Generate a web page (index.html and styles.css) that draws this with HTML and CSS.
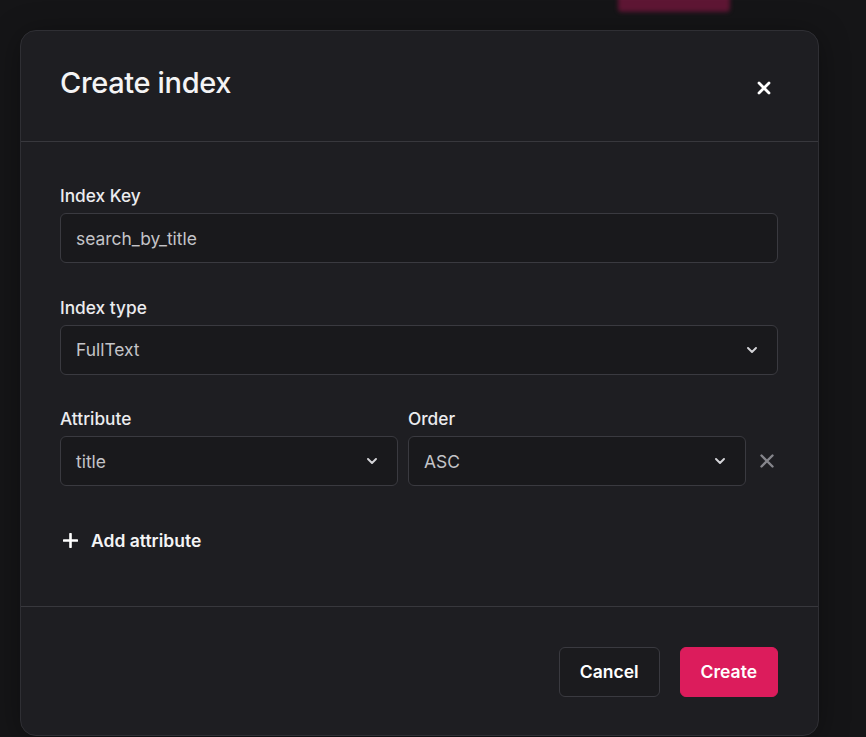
FILE: index.html
```html
<!DOCTYPE html>
<html lang="en">
<head>
<meta charset="utf-8">
<title>Create index</title>
<link rel="stylesheet" href="styles.css">
</head>
<body>
<div class="backdrop-btn"></div>
<div class="overlay">
  <div class="modal">
    <div class="modal-header">
      <h2 class="modal-title">Create index</h2>
      <button class="close-btn" aria-label="Close">
        <svg width="14" height="14" viewBox="0 0 14 14"><path d="M2 2 L12 12 M12 2 L2 12" stroke="#ffffff" stroke-width="2.8" stroke-linecap="round"/></svg>
      </button>
    </div>
    <div class="modal-body">
      <div class="field">
        <label class="label">Index Key</label>
        <div class="input">search_by_title</div>
      </div>
      <div class="field">
        <label class="label">Index type</label>
        <div class="input select">
          <span>FullText</span>
          <svg class="chev" width="10" height="6" viewBox="0 0 10 6"><path d="M1 1 L5 5 L9 1" fill="none" stroke="#d4d4d8" stroke-width="1.9" stroke-linecap="round" stroke-linejoin="round"/></svg>
        </div>
      </div>
      <div class="row">
        <div class="field col">
          <label class="label">Attribute</label>
          <div class="input select">
            <span>title</span>
            <svg class="chev" width="10" height="6" viewBox="0 0 10 6"><path d="M1 1 L5 5 L9 1" fill="none" stroke="#d4d4d8" stroke-width="1.9" stroke-linecap="round" stroke-linejoin="round"/></svg>
          </div>
        </div>
        <div class="field col">
          <label class="label">Order</label>
          <div class="input select">
            <span>ASC</span>
            <svg class="chev" width="10" height="6" viewBox="0 0 10 6"><path d="M1 1 L5 5 L9 1" fill="none" stroke="#d4d4d8" stroke-width="1.9" stroke-linecap="round" stroke-linejoin="round"/></svg>
          </div>
        </div>
        <button class="remove-btn" aria-label="Remove">
          <svg width="14" height="14" viewBox="0 0 14 14"><path d="M1.5 1.5 L12.5 12.5 M12.5 1.5 L1.5 12.5" stroke="#85858b" stroke-width="2.4" stroke-linecap="round"/></svg>
        </button>
      </div>
      <button class="add-btn">
        <svg width="15" height="15" viewBox="0 0 15 15"><path d="M7.5 1 V14 M1 7.5 H14" stroke="#ffffff" stroke-width="2.6" stroke-linecap="round"/></svg>
        <span>Add attribute</span>
      </button>
    </div>
    <div class="modal-footer">
      <button class="btn btn-secondary">Cancel</button>
      <button class="btn btn-primary">Create</button>
    </div>
  </div>
</div>
</body>
</html>
```

FILE: styles.css
```css
* { box-sizing: border-box; }
html, body {
  margin: 0;
  padding: 0;
  height: 100%;
}
body {
  background: #151517;
  font-family: Inter, "Noto Sans", sans-serif;
  color: #ececef;
  overflow: hidden;
  position: relative;
}
.backdrop-btn {
  position: absolute;
  left: 618px;
  top: -10px;
  width: 112px;
  height: 22px;
  background: #5e1634;
  border-radius: 4px;
  filter: blur(2px);
}
.overlay {
  position: relative;
  padding: 30px 0 0 20px;
}
.modal {
  width: 799px;
  height: 706px;
  background: #1e1e22;
  border: 1px solid #2f2f34;
  border-radius: 16px;
  box-shadow: 0 4px 30px rgba(0,0,0,0.35);
  display: flex;
  flex-direction: column;
}
.modal-header {
  display: flex;
  align-items: center;
  justify-content: space-between;
  padding: 35px 47px 41px 39px;
  border-bottom: 1px solid #38383d;
}
.modal-title {
  margin: 0;
  font-size: 29px;
  line-height: 34px;
  font-weight: 500;
  letter-spacing: -0.35px;
  color: #f4f4f5;
}
.close-btn {
  background: none;
  border: 0;
  padding: 0;
  margin-top: 9px;
  width: 14px;
  height: 14px;
  display: flex;
}
.modal-body {
  padding: 42px 40px 45px 39px;
  display: flex;
  flex-direction: column;
  gap: 32.5px;
  border-bottom: 1px solid #38383d;
}
.field {
  display: flex;
  flex-direction: column;
  gap: 5px;
}
.label {
  font-size: 17.3px;
  line-height: 24px;
  font-weight: 500;
  color: #ececef;
}
.input {
  height: 50px;
  background: #19191c;
  border: 1px solid #3a3a40;
  border-radius: 6px;
  padding: 0 15px;
  display: flex;
  align-items: center;
  font-size: 17.4px;
  color: #c4c4c8;
}
.select {
  justify-content: space-between;
  padding-right: 20px;
}
.chev { display: block; }
.row {
  display: flex;
  align-items: flex-end;
  gap: 10px;
}
.col { flex: 0 0 338px; }
.remove-btn {
  background: none;
  border: 0;
  padding: 0;
  width: 32px;
  height: 50px;
  display: flex;
  align-items: center;
  justify-content: center;
}
.add-btn {
  align-self: flex-start;
  margin-top: 2px;
  background: none;
  border: 0;
  height: 40px;
  padding: 0 0 0 3px;
  display: flex;
  align-items: center;
  gap: 13px;
  font-family: inherit;
  font-size: 17.5px;
  font-weight: 600;
  color: #f4f4f5;
}
.add-btn svg { display: block; }
.modal-footer {
  display: flex;
  justify-content: flex-end;
  gap: 20px;
  padding: 40px 40px;
}
.btn {
  height: 50px;
  border-radius: 6px;
  font-family: inherit;
  font-size: 17.5px;
  font-weight: 600;
  padding: 0 20px;
  color: #ffffff;
}
.btn-secondary {
  background: #1b1b1e;
  border: 1px solid #3a3a40;
}
.btn-primary {
  background: #dc1c5c;
  border: 1px solid #dc1c5c;
}
```
